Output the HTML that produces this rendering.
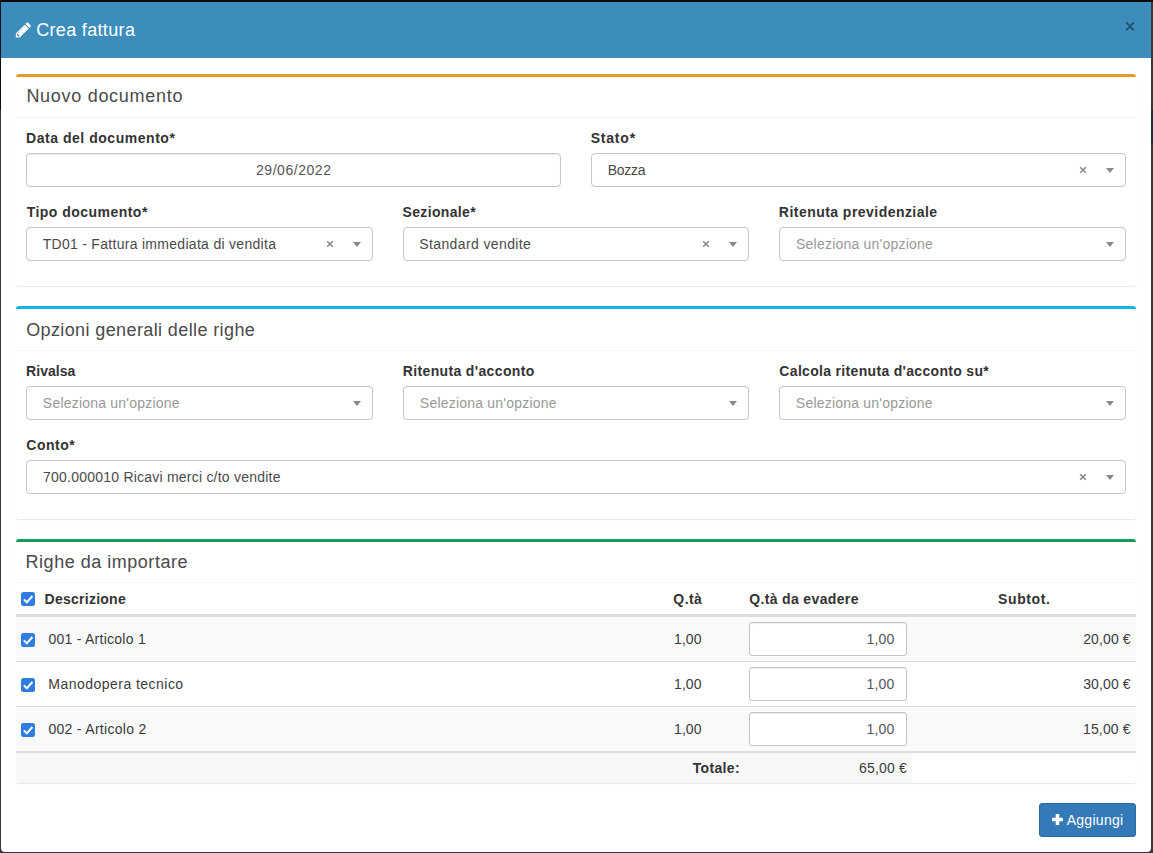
<!DOCTYPE html>
<html><head><meta charset="utf-8"><style>
html,body{margin:0;padding:0;}
body{width:1153px;height:853px;position:relative;overflow:hidden;background:#383838;font-family:"Liberation Sans",sans-serif;}
.modal{position:absolute;left:1px;top:2px;width:1150px;height:850px;background:#fff;border-radius:0 0 4px 4px;}
.t{position:absolute;line-height:1;white-space:nowrap;}
.r{position:absolute;}
</style></head><body>
<div style="position:absolute;left:0;top:0;width:1153px;height:2px;background:#0b0a0a"></div>
<div style="position:absolute;left:0;top:0;width:1px;height:110px;background:#0a1118"></div>
<div style="position:absolute;left:1151px;top:110px;width:2px;height:34px;background:#1d3038"></div>
<div class="modal"></div>
<div class="r" style="left:1px;top:2px;width:1150px;height:56px;background:#3c8dbc;"></div>
<svg class="r" style="left:12px;top:18px" width="24" height="24" viewBox="0 0 24 24"><g transform="translate(10.56 12.79) rotate(45)"><rect x="-2.8" y="-9.55" width="5.6" height="3.3" rx="1.1" fill="#fff"/><rect x="-2.8" y="-6.6" width="5.6" height="0.7" fill="#2a5f80"/><rect x="-2.8" y="-5.9" width="5.6" height="12.65" fill="#fff"/><path d="M-2.8 6.75 L2.8 6.75 L0 9.55 Z" fill="#fff"/><rect x="-1.2" y="5.7" width="2.4" height="1.2" fill="#2a5f80"/><rect x="-2.0" y="-5.9" width="0.5" height="11.5" fill="#3c8dbc" opacity="0.35"/></g></svg>
<div class="t" style="left:36.15px;top:21.36px;font-size:18px;font-weight:400;color:#fff;letter-spacing:0.337px;">Crea fattura</div>
<svg class="r" style="left:1120px;top:17px" width="20" height="20" viewBox="0 0 20 20"><path d="M6.2 5.6 L13.8 13.4 M13.8 5.6 L6.2 13.4" stroke="#6aaad0" stroke-width="2.1" transform="translate(0 1)" opacity="0.5"/><path d="M6.2 5.6 L13.8 13.4 M13.8 5.6 L6.2 13.4" stroke="#1f5477" stroke-width="2.1"/></svg>
<div class="r" style="left:16px;top:74px;width:1120px;height:212px;background:#fff;border-top:3px solid #e39c24;border-radius:3px;box-shadow:0 1px 1px rgba(0,0,0,.1);box-sizing:border-box;"></div>
<div class="r" style="left:16px;top:117px;width:1120px;height:1px;background:#f4f4f4;"></div>
<div class="t" style="left:26.39px;top:87.26px;font-size:18px;font-weight:400;color:#4a4a4a;letter-spacing:0.712px;">Nuovo documento</div>
<div class="t" style="left:26.05px;top:131.15px;font-size:14px;font-weight:700;color:#333;letter-spacing:0.532px;">Data del documento*</div>
<div class="r" style="left:26px;top:153px;width:535px;height:34px;border:1px solid #c4c4c4;border-radius:4px;box-sizing:border-box;background:#fff;box-shadow:inset 0 1px 1px rgba(0,0,0,.075);"></div>
<div class="t" style="left:255.99px;top:163.35px;font-size:14px;font-weight:400;color:#555;letter-spacing:0.543px;">29/06/2022</div>
<div class="t" style="left:590.64px;top:131.15px;font-size:14px;font-weight:700;color:#333;letter-spacing:0.803px;">Stato*</div>
<div class="r" style="left:591px;top:153px;width:535px;height:34px;border:1px solid #c4c4c4;border-radius:4px;box-sizing:border-box;background:#fff;"></div>
<svg class="r" style="left:1078px;top:165px" width="10" height="10" viewBox="0 0 10 10"><path d="M2.2 2.2 L7.8 7.8 M7.8 2.2 L2.2 7.8" stroke="#888" stroke-width="1.6"/></svg>
<div class="r" style="left:1106px;top:168.0px;width:0;height:0;border-style:solid;border-width:5px 4px 0 4px;border-color:#888 transparent transparent transparent;"></div>
<div class="t" style="left:607.65px;top:163.35px;font-size:14px;font-weight:400;color:#4a4a4a;letter-spacing:-0.276px;">Bozza</div>
<div class="t" style="left:26.65px;top:204.95px;font-size:14px;font-weight:700;color:#333;letter-spacing:0.474px;">Tipo documento*</div>
<div class="t" style="left:402.44px;top:204.95px;font-size:14px;font-weight:700;color:#333;letter-spacing:0.361px;">Sezionale*</div>
<div class="t" style="left:778.85px;top:204.95px;font-size:14px;font-weight:700;color:#333;letter-spacing:0.460px;">Ritenuta previdenziale</div>
<div class="r" style="left:26px;top:227px;width:347px;height:34px;border:1px solid #c4c4c4;border-radius:4px;box-sizing:border-box;background:#fff;"></div>
<svg class="r" style="left:325px;top:239px" width="10" height="10" viewBox="0 0 10 10"><path d="M2.2 2.2 L7.8 7.8 M7.8 2.2 L2.2 7.8" stroke="#888" stroke-width="1.6"/></svg>
<div class="r" style="left:353px;top:242.0px;width:0;height:0;border-style:solid;border-width:5px 4px 0 4px;border-color:#888 transparent transparent transparent;"></div>
<div class="r" style="left:403px;top:227px;width:346px;height:34px;border:1px solid #c4c4c4;border-radius:4px;box-sizing:border-box;background:#fff;"></div>
<svg class="r" style="left:701px;top:239px" width="10" height="10" viewBox="0 0 10 10"><path d="M2.2 2.2 L7.8 7.8 M7.8 2.2 L2.2 7.8" stroke="#888" stroke-width="1.6"/></svg>
<div class="r" style="left:729px;top:242.0px;width:0;height:0;border-style:solid;border-width:5px 4px 0 4px;border-color:#888 transparent transparent transparent;"></div>
<div class="r" style="left:779px;top:227px;width:347px;height:34px;border:1px solid #c4c4c4;border-radius:4px;box-sizing:border-box;background:#fff;"></div>
<div class="r" style="left:1106px;top:242.0px;width:0;height:0;border-style:solid;border-width:5px 4px 0 4px;border-color:#888 transparent transparent transparent;"></div>
<div class="t" style="left:42.64px;top:237.35px;font-size:14px;font-weight:400;color:#4a4a4a;letter-spacing:0.295px;">TD01 - Fattura immediata di vendita</div>
<div class="t" style="left:419.24px;top:237.35px;font-size:14px;font-weight:400;color:#4a4a4a;letter-spacing:0.387px;">Standard vendite</div>
<div class="t" style="left:796.04px;top:237.35px;font-size:14px;font-weight:400;color:#999;letter-spacing:0.216px;">Seleziona un'opzione</div>
<div class="r" style="left:16px;top:306px;width:1120px;height:213px;background:#fff;border-top:3px solid #12b6e2;border-radius:3px;box-shadow:0 1px 1px rgba(0,0,0,.1);box-sizing:border-box;"></div>
<div class="r" style="left:16px;top:350px;width:1120px;height:1px;background:#f4f4f4;"></div>
<div class="t" style="left:26.17px;top:321.06px;font-size:18px;font-weight:400;color:#4a4a4a;letter-spacing:0.389px;">Opzioni generali delle righe</div>
<div class="t" style="left:26.05px;top:364.45px;font-size:14px;font-weight:700;color:#333;letter-spacing:0.041px;">Rivalsa</div>
<div class="t" style="left:402.75px;top:364.45px;font-size:14px;font-weight:700;color:#333;letter-spacing:0.359px;">Ritenuta d'acconto</div>
<div class="t" style="left:779.37px;top:364.45px;font-size:14px;font-weight:700;color:#333;letter-spacing:0.319px;">Calcola ritenuta d'acconto su*</div>
<div class="r" style="left:26px;top:386px;width:347px;height:34px;border:1px solid #c4c4c4;border-radius:4px;box-sizing:border-box;background:#fff;"></div>
<div class="r" style="left:353px;top:401.0px;width:0;height:0;border-style:solid;border-width:5px 4px 0 4px;border-color:#888 transparent transparent transparent;"></div>
<div class="t" style="left:42.84px;top:396.45px;font-size:14px;font-weight:400;color:#999;letter-spacing:0.216px;">Seleziona un'opzione</div>
<div class="r" style="left:403px;top:386px;width:346px;height:34px;border:1px solid #c4c4c4;border-radius:4px;box-sizing:border-box;background:#fff;"></div>
<div class="r" style="left:729px;top:401.0px;width:0;height:0;border-style:solid;border-width:5px 4px 0 4px;border-color:#888 transparent transparent transparent;"></div>
<div class="t" style="left:419.84px;top:396.45px;font-size:14px;font-weight:400;color:#999;letter-spacing:0.216px;">Seleziona un'opzione</div>
<div class="r" style="left:779px;top:386px;width:347px;height:34px;border:1px solid #c4c4c4;border-radius:4px;box-sizing:border-box;background:#fff;"></div>
<div class="r" style="left:1106px;top:401.0px;width:0;height:0;border-style:solid;border-width:5px 4px 0 4px;border-color:#888 transparent transparent transparent;"></div>
<div class="t" style="left:795.84px;top:396.45px;font-size:14px;font-weight:400;color:#999;letter-spacing:0.216px;">Seleziona un'opzione</div>
<div class="t" style="left:26.27px;top:438.35px;font-size:14px;font-weight:700;color:#333;letter-spacing:0.505px;">Conto*</div>
<div class="r" style="left:26px;top:460px;width:1100px;height:34px;border:1px solid #c4c4c4;border-radius:4px;box-sizing:border-box;background:#fff;"></div>
<svg class="r" style="left:1078px;top:472px" width="10" height="10" viewBox="0 0 10 10"><path d="M2.2 2.2 L7.8 7.8 M7.8 2.2 L2.2 7.8" stroke="#888" stroke-width="1.6"/></svg>
<div class="r" style="left:1106px;top:475.0px;width:0;height:0;border-style:solid;border-width:5px 4px 0 4px;border-color:#888 transparent transparent transparent;"></div>
<div class="t" style="left:43.08px;top:470.35px;font-size:14px;font-weight:400;color:#4a4a4a;letter-spacing:0.223px;">700.000010 Ricavi merci c/to vendite</div>
<div class="r" style="left:16px;top:539px;width:1120px;height:244px;background:#fff;border-top:3px solid #159c5b;border-radius:3px;box-shadow:0 1px 1px rgba(0,0,0,.1);box-sizing:border-box;"></div>
<div class="r" style="left:16px;top:582px;width:1120px;height:1px;background:#f4f4f4;"></div>
<div class="t" style="left:25.59px;top:552.66px;font-size:18px;font-weight:400;color:#4a4a4a;letter-spacing:0.517px;">Righe da importare</div>
<div class="r" style="left:16px;top:614px;width:1120px;height:3px;background:#ddd;"></div>
<svg class="r" style="left:21px;top:592px" width="14" height="14" viewBox="0 0 14 14"><rect x="0" y="0" width="14" height="14" rx="2.5" fill="#2f7de1"/><path d="M2.8 7.4 L5.8 10.3 L11.4 4" fill="none" stroke="#fff" stroke-width="2"/></svg>
<div class="t" style="left:44.55px;top:591.95px;font-size:14px;font-weight:700;color:#333;letter-spacing:0.257px;">Descrizione</div>
<div class="t" style="left:673.37px;top:591.95px;font-size:14px;font-weight:700;color:#333;letter-spacing:0.426px;">Q.tà</div>
<div class="t" style="left:749.17px;top:591.95px;font-size:14px;font-weight:700;color:#333;letter-spacing:0.359px;">Q.tà da evadere</div>
<div class="t" style="left:998.04px;top:591.95px;font-size:14px;font-weight:700;color:#333;letter-spacing:0.611px;">Subtot.</div>
<div class="r" style="left:16px;top:617px;width:1120px;height:44px;background:#f9f9f9;"></div>
<div class="r" style="left:16px;top:661px;width:1120px;height:1px;background:#ddd;"></div>
<svg class="r" style="left:21px;top:633px" width="14" height="14" viewBox="0 0 14 14"><rect x="0" y="0" width="14" height="14" rx="2.5" fill="#2f7de1"/><path d="M2.8 7.4 L5.8 10.3 L11.4 4" fill="none" stroke="#fff" stroke-width="2"/></svg>
<div class="t" style="left:48.40px;top:632.15px;font-size:14px;font-weight:400;color:#3c3c3c;letter-spacing:0.262px;">001 - Articolo 1</div>
<div class="t" style="left:674.09px;top:632.15px;font-size:14px;font-weight:400;color:#3c3c3c;letter-spacing:0.058px;">1,00</div>
<div class="r" style="left:749px;top:622px;width:158px;height:34px;border:1px solid #c4c4c4;border-radius:3px;box-sizing:border-box;background:#fff;box-shadow:inset 0 1px 1px rgba(0,0,0,.075);"></div>
<div class="t" style="left:866.59px;top:632.15px;font-size:14px;font-weight:400;color:#555;letter-spacing:0.158px;">1,00</div>
<div class="t" style="left:1083.19px;top:632.15px;font-size:14px;font-weight:400;color:#3c3c3c;letter-spacing:0.116px;">20,00 €</div>
<div class="r" style="left:16px;top:662px;width:1120px;height:44px;background:#fff;"></div>
<div class="r" style="left:16px;top:706px;width:1120px;height:1px;background:#ddd;"></div>
<svg class="r" style="left:21px;top:678px" width="14" height="14" viewBox="0 0 14 14"><rect x="0" y="0" width="14" height="14" rx="2.5" fill="#2f7de1"/><path d="M2.8 7.4 L5.8 10.3 L11.4 4" fill="none" stroke="#fff" stroke-width="2"/></svg>
<div class="t" style="left:48.35px;top:677.15px;font-size:14px;font-weight:400;color:#3c3c3c;letter-spacing:0.468px;">Manodopera tecnico</div>
<div class="t" style="left:674.09px;top:677.15px;font-size:14px;font-weight:400;color:#3c3c3c;letter-spacing:0.058px;">1,00</div>
<div class="r" style="left:749px;top:667px;width:158px;height:34px;border:1px solid #c4c4c4;border-radius:3px;box-sizing:border-box;background:#fff;box-shadow:inset 0 1px 1px rgba(0,0,0,.075);"></div>
<div class="t" style="left:866.59px;top:677.15px;font-size:14px;font-weight:400;color:#555;letter-spacing:0.158px;">1,00</div>
<div class="t" style="left:1083.18px;top:677.15px;font-size:14px;font-weight:400;color:#3c3c3c;letter-spacing:0.118px;">30,00 €</div>
<div class="r" style="left:16px;top:707px;width:1120px;height:44px;background:#f9f9f9;"></div>
<div class="r" style="left:16px;top:751px;width:1120px;height:1px;background:#ddd;"></div>
<svg class="r" style="left:21px;top:723px" width="14" height="14" viewBox="0 0 14 14"><rect x="0" y="0" width="14" height="14" rx="2.5" fill="#2f7de1"/><path d="M2.8 7.4 L5.8 10.3 L11.4 4" fill="none" stroke="#fff" stroke-width="2"/></svg>
<div class="t" style="left:48.40px;top:722.15px;font-size:14px;font-weight:400;color:#3c3c3c;letter-spacing:0.304px;">002 - Articolo 2</div>
<div class="t" style="left:674.09px;top:722.15px;font-size:14px;font-weight:400;color:#3c3c3c;letter-spacing:0.058px;">1,00</div>
<div class="r" style="left:749px;top:712px;width:158px;height:34px;border:1px solid #c4c4c4;border-radius:3px;box-sizing:border-box;background:#fff;box-shadow:inset 0 1px 1px rgba(0,0,0,.075);"></div>
<div class="t" style="left:866.59px;top:722.15px;font-size:14px;font-weight:400;color:#555;letter-spacing:0.158px;">1,00</div>
<div class="t" style="left:1082.99px;top:722.15px;font-size:14px;font-weight:400;color:#3c3c3c;letter-spacing:0.150px;">15,00 €</div>
<div class="r" style="left:16px;top:751px;width:1120px;height:2px;background:#ddd;"></div>
<div class="r" style="left:16px;top:753px;width:896px;height:30px;background:#f8f8f8;"></div>
<div class="t" style="left:692.75px;top:761.15px;font-size:14px;font-weight:700;color:#333;letter-spacing:0.335px;">Totale:</div>
<div class="t" style="left:859.05px;top:761.15px;font-size:14px;font-weight:400;color:#3c3c3c;letter-spacing:0.155px;">65,00 €</div>
<div class="r" style="left:1039px;top:803px;width:97px;height:34px;background:#347ab8;border:1px solid #2e6a9e;border-radius:3px;box-sizing:border-box;"></div>
<svg class="r" style="left:1052px;top:814px" width="11" height="11" viewBox="0 0 11 11"><rect x="3.7" y="0" width="3.6" height="11" rx="0.6" fill="#fff"/><rect x="0" y="3.7" width="11" height="3.6" rx="0.6" fill="#fff"/></svg>
<div class="t" style="left:1066.68px;top:812.85px;font-size:14px;font-weight:400;color:#fff;letter-spacing:0.288px;">Aggiungi</div>
</body></html>
